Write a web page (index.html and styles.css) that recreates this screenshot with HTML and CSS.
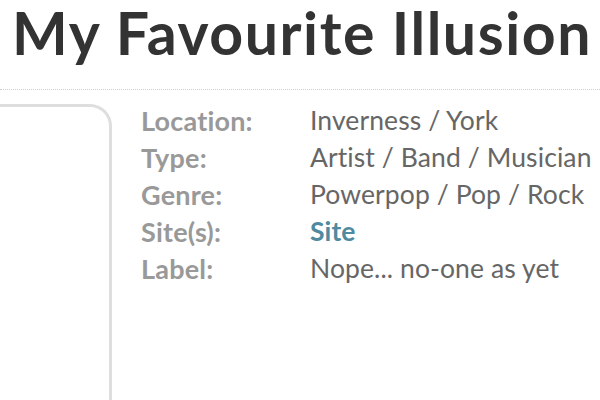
FILE: index.html
```html
<!DOCTYPE html>
<html>
<head>
<meta charset="utf-8">
<link rel="stylesheet" href="styles.css">
</head>
<body>
<header class="head">
  <h1 class="title">My Favourite Illusion</h1>
</header>
<main class="content">
  <div class="photo"></div>
  <dl class="info">
    <dt>Location:</dt><dd>Inverness / York</dd>
    <dt>Type:</dt><dd>Artist / Band / Musician</dd>
    <dt>Genre:</dt><dd>Powerpop / Pop / Rock</dd>
    <dt>Site(s):</dt><dd><a class="link" href="#">Site</a></dd>
    <dt>Label:</dt><dd>Nope... no-one as yet</dd>
  </dl>
</main>
</body>
</html>
```
FILE: styles.css
```css
html, body {
  margin: 0;
  padding: 0;
  background: #fff;
  overflow: hidden;
}
body {
  width: 600px;
  height: 400px;
  font-family: Lato, "Liberation Sans", sans-serif;
}
.head {
  border-bottom: 1px dotted #cfcfcf;
  height: 89px;
}
.title {
  margin: 0;
  padding: 0 0 0 12px;
  font-size: 59px;
  line-height: 66px;
  font-weight: 700;
  color: #333;
  white-space: nowrap;
  letter-spacing: 1.55px;
}
.content {
  display: flex;
  padding-top: 14px;
  height: 296px;
}
.photo {
  width: 109px;
  border: 3px solid #dedede;
  border-left: none;
  border-bottom: none;
  border-top-right-radius: 22px;
  flex: none;
}
.info {
  margin: -2px 0 0 29px;
  display: grid;
  grid-template-columns: 169px auto;
  grid-auto-rows: 37px;
  font-size: 26.5px;
  line-height: 37px;
}
.info dt {
  font-weight: 700;
  color: #999;
  font-size: 27px;
  letter-spacing: 0.2px;
}
.info dd {
  margin: 0;
  color: #666;
  white-space: nowrap;
  letter-spacing: 0.1px;
}
.link {
  color: #4f8aa0;
  font-weight: 700;
  text-decoration: none;
}
```
